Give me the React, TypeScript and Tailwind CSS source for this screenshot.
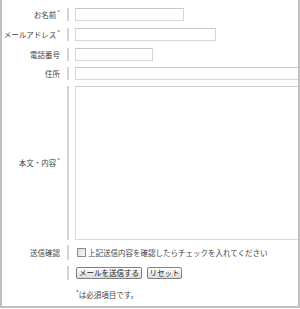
import React from 'react';

const font = { fontFamily: '"Noto Sans CJK JP", "Noto Sans", sans-serif' };

function Label({ children, className = '' }: { children?: React.ReactNode; className?: string }) {
  return (
    <div
      className={`flex w-[67px] shrink-0 items-center justify-end whitespace-nowrap border-r-2 border-[#d4d4d4] pr-[7px] text-[7.5px] leading-none text-[#444] ${className}`}
    >
      {children}
    </div>
  );
}

function Req() {
  return <span className="relative -top-[2px] ml-[1px] text-[6px] text-[#666]">*</span>;
}

export default function App() {
  return (
    <div className="h-[309px] w-[300px] bg-white" style={font}>
      <div className="h-[308px] w-[300px] overflow-hidden border-x-2 border-b-2 border-[#c0c0c0] bg-white">
        {/* Name */}
        <div className="mt-[8px] flex h-[13px]">
          <Label>
            お名前
            <Req />
          </Label>
          <input className="ml-[6px] h-[13px] w-[109px] border border-[#d6d6d6] border-t-[#c8c8c8] bg-white outline-none" />
        </div>

        {/* Email */}
        <div className="mt-[7px] flex h-[13px]">
          <Label>
            メールアドレス
            <Req />
          </Label>
          <input className="ml-[6px] h-[13px] w-[141px] border border-[#d6d6d6] border-t-[#c8c8c8] bg-white outline-none" />
        </div>

        {/* Phone */}
        <div className="mt-[7px] flex h-[13px]">
          <Label>電話番号</Label>
          <input className="ml-[6px] h-[13px] w-[78px] border border-[#d6d6d6] border-t-[#c8c8c8] bg-white outline-none" />
        </div>

        {/* Address */}
        <div className="mt-[6px] flex h-[13px]">
          <Label>住所</Label>
          <input className="ml-[6px] h-[13px] w-[240px] shrink-0 border border-[#d6d6d6] border-t-[#c8c8c8] bg-white outline-none" />
        </div>

        {/* Body */}
        <div className="mt-[6px] flex h-[154px]">
          <Label>
            本文・内容
            <Req />
          </Label>
          <textarea className="ml-[6px] h-[154px] w-[240px] shrink-0 resize-none border border-[#dadada] border-t-[#cccccc] bg-white outline-none" />
        </div>

        {/* Confirm */}
        <div className="mt-[5px] flex h-[15px]">
          <Label>送信確認</Label>
          <div className="ml-[8px] flex items-center whitespace-nowrap text-[7.5px] leading-none text-[#444]">
            <span className="mr-[2px] h-[9px] w-[9px] border border-[#8c8c8c] bg-gradient-to-br from-[#dcdcdc] to-[#f8f8f8]" />
            上記送信内容を確認したらチェックを入れてください
          </div>
        </div>

        {/* Buttons */}
        <div className="mt-[6px] flex h-[14px]">
          <Label />
          <div className="ml-[7px] flex items-center gap-[5px]">
            <button className="h-[12px] w-[66px] rounded-[2px] border border-[#7f7f7f] bg-gradient-to-b from-white to-[#dadada] text-[7.5px] leading-none text-[#222]">
              メールを送信する
            </button>
            <button className="h-[12px] w-[35px] rounded-[2px] border border-[#7f7f7f] bg-gradient-to-b from-white to-[#dadada] text-[7.5px] leading-none text-[#222]">
              リセット
            </button>
          </div>
        </div>

        {/* Note */}
        <div className="mt-[9px] flex h-[12px]">
          <div className="w-[67px] shrink-0" />
          <div className="ml-[7px] flex items-center text-[7.5px] leading-none text-[#444]">
            <span className="relative -top-[2px] text-[6px]">*</span>は必須項目です。
          </div>
        </div>
      </div>
    </div>
  );
}
